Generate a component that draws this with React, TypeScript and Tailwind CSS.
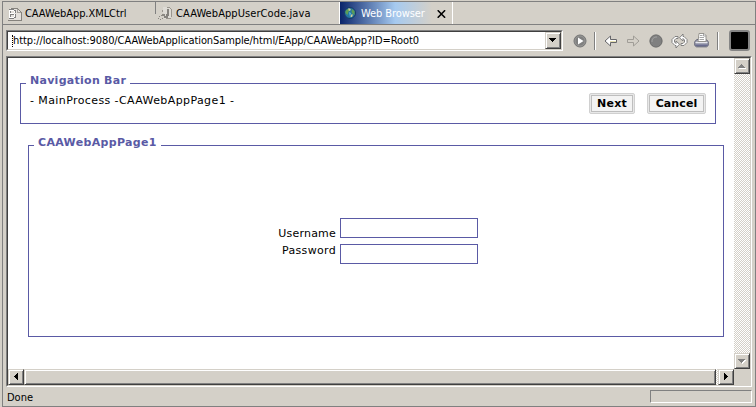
import React from 'react';

const ui = "font-['DejaVu_Sans_Condensed','DejaVu_Sans',sans-serif]";
const raised =
  'box-border border border-t-[#d4d0c8] border-l-[#d4d0c8] border-r-[#404040] border-b-[#404040] bg-[#d4d0c8] shadow-[inset_1px_1px_0_#fff,inset_-1px_-1px_0_#808080]';
const checker =
  'bg-[repeating-conic-gradient(#d4d0c8_0_25%,#fff_0_50%)] bg-[length:2px_2px]';

function Arrow({ dir, disabled }: { dir: 'up' | 'down' | 'left' | 'right'; disabled?: boolean }) {
  const d = {
    up: 'M3 0h1v1h1v1h1v1h1v1H0V3h1V2h1V1h1z',
    down: 'M0 0h7v1H6v1H5v1H4v1H3V3H2V2H1V1H0z',
    left: 'M3 0h1v7H3V6H2V5H1V4H0V3h1V2h1V1h1z',
    right: 'M0 0h1v1h1v1h1v1h1v1H3v1H2v1H1v1H0z',
  }[dir];
  const flat = dir === 'up' || dir === 'down';
  return (
    <svg width={flat ? 8 : 5} height={flat ? 5 : 8} shapeRendering="crispEdges" className="shrink-0">
      {disabled && <path d={d} fill="#fff" transform="translate(1 1)" />}
      <path d={d} fill={disabled ? '#808080' : '#000'} />
    </svg>
  );
}

function DocIcon() {
  return (
    <svg width="16" height="16" className="shrink-0" shapeRendering="crispEdges">
      <path d="M3 3h8v1h1v1h1v1h1v9H2" fill="#e4e1dc" />
      <path d="M4 3.5h7M11 4.5h1M12 5.5h1M13 6.5h1M14.5 7v8M1 15.5h14" fill="none" stroke="#85827d" />
      <path d="M10.5 4v3.5H14" fill="none" stroke="#a5a29c" />
      <path d="M2 4.5h5M2 8.5h5M2 12.5h5M2.5 5v8M7.5 5v3M7.5 9v4" fill="none" stroke="#808080" strokeWidth="2" />
      <path d="M2 5.5h5M2 8.5h5M2 12.5h5M2.5 5v8M7.5 6v2M7.5 9v3" fill="none" stroke="#fff" />
    </svg>
  );
}

function JavaIcon() {
  return (
    <svg width="15" height="16" className="shrink-0" shapeRendering="crispEdges">
      <path d="M5 2h6l2 2v10H6z" fill="#dedbd5" />
      <path d="M9 2.5h3M12 3.5h1M13.5 4v8M8 13.5h5M4.5 5v2" fill="none" stroke="#99958e" />
      <path d="M10 4v6H9v2H6" fill="none" stroke="#85827d" strokeWidth="2" />
      <path d="M4 9l1 2 1-2 1 2M0 13h1m1 1h1m1-1h1m-2-3h1M1 11h1" fill="none" stroke="#8b8882" />
    </svg>
  );
}

function Globe() {
  return (
    <svg width="12" height="12" viewBox="0 0 12 12" className="shrink-0">
      <circle cx="6" cy="6" r="5.5" fill="#2676a1" stroke="#173966" />
      <path d="M1.5 4l2-2 2 1-1 2-1 3-2-2zM8 2l2.5 2v4L9 7 7.5 5z" fill="#5d9e55" />
      <path d="M4 1.5h2L7 3 5 4zM7 7.5h2L8 10H6.5z" fill="#d4ce92" />
      <path d="M5 5l2 1-1 4z" fill="#57b8de" />
    </svg>
  );
}

function GoIcon() {
  return (
    <svg width="14" height="14" viewBox="0 0 14 14" className="shrink-0">
      <circle cx="7" cy="7" r="6" fill="#808080" stroke="#747474" />
      <circle cx="7" cy="7" r="5" fill="none" stroke="#a0a09e" strokeWidth=".7" />
      <path d="M5 3.5L10.5 7 5 10.5z" fill="#fff" />
    </svg>
  );
}

function NavArrow({ forward }: { forward?: boolean }) {
  return (
    <svg width="13" height="12" viewBox="0 0 13 12" className="shrink-0">
      {forward ? (
        <path d="M.5 4.5h6V1l5.5 5-5.5 5V7.5h-6z" fill="#d4d0c8" stroke="#a09d97" />
      ) : (
        <>
          <path d="M12.5 4.5H6.5V1L1 6l5.5 5V7.5h6z" fill="#fff" stroke="#66666a" />
          <path d="M6 6.5h6" stroke="#e5dfb0" />
        </>
      )}
    </svg>
  );
}

function StopIcon() {
  return (
    <svg width="14" height="14" viewBox="0 0 14 14" className="shrink-0">
      <circle cx="7" cy="7" r="6.1" fill="#808080" stroke="#666" />
      <path d="M3 8a4.3 4.3 0 0 1 5-5" fill="none" stroke="#a2a2a2" />
    </svg>
  );
}

function RefreshIcon() {
  return (
    <svg width="17" height="16" viewBox="0 0 17 16" className="shrink-0">
      <path d="M7 3.5H4L1 6.5v3l3 3h1v2.5l3.5-3.8L5 8v2.5L3.5 9V7L5 5.5h2z" fill="#fff" stroke="#777" strokeWidth=".9" />
      <path d="M10 12.5h3l3-3v-3l-3-3h-1V1L8.5 4.8 12 8V5.5L13.5 7v2L12 10.5h-2z" fill="#fff" stroke="#777" strokeWidth=".9" />
    </svg>
  );
}

function PrintIcon() {
  return (
    <svg width="15" height="15" viewBox="0 0 15 15" className="shrink-0">
      <path d="M3 6.5L.8 8.5v4l1.7 1.3h10l1.7-1.3v-4L12 6.5z" fill="#a5a7b7" stroke="#5b5d72" />
      <path d="M4 8.5L5 .5h5L12 2.5v6z" fill="#fff" stroke="#8d8b86" strokeWidth=".9" />
      <path d="M6 2.5h2.5M5.5 4.5h4.5M5.5 6.5h4.5M9.5 1v2H12" fill="none" stroke="#8f8f8f" strokeWidth=".8" />
      <path d="M1.5 9.5h12" stroke="#e6e6ec" />
      <path d="M1.5 12.2h12" stroke="#62658a" strokeWidth="1.4" />
    </svg>
  );
}

const Separator = () => <div className="h-[18px] w-[2px] shrink-0 border-l border-r border-l-[#808080] border-r-white" />;

function Tabs() {
  return (
    <div className="flex h-[23px] shrink-0 border-b border-[#808080] text-[11px] leading-[13px]">
      <div className="flex w-[152px] shrink-0 pt-[3px] pl-[4px]">
        <DocIcon />
        <span className="mt-[2px] ml-[2px] whitespace-nowrap tracking-[-0.07px]">CAAWebApp.XMLCtrl</span>
      </div>
      <div className="h-[12px] w-px shrink-0 bg-[#808080]" />
      <div className="flex w-[184px] shrink-0 pt-[3px] pl-[2px]">
        <JavaIcon />
        <span className="mt-[2px] ml-[3px] whitespace-nowrap tracking-[0.08px]">CAAWebAppUserCode.java</span>
      </div>
      <div className="-ml-px flex h-[22px] w-[114px] shrink-0 border-r border-l border-white">
        <div className="flex w-[92px] bg-[linear-gradient(90deg,#0a246a_0%,#a6caf0_60%,#d4d0c8_100%)] pt-[5px] pl-[4px] text-white">
          <Globe />
          <span className="ml-[5px] whitespace-nowrap tracking-[-0.08px]">Web Browser</span>
        </div>
        <svg width="9" height="8" viewBox="0 0 9 8" className="mt-[8px] ml-[5px] shrink-0">
          <path d="M.7.3l7.4 7.4M8.1.3L.7 7.7" stroke="#000" strokeWidth="1.6" />
        </svg>
      </div>
    </div>
  );
}

function Toolbar() {
  return (
    <div className="flex h-[31px] shrink-0 items-start pt-[5px] pl-[3px]">
      <div className="flex h-[21px] w-[557px] shrink-0 border border-t-[#808080] border-r-white border-b-white border-l-[#808080]">
        <div className="flex grow border border-t-[#404040] border-r-[#d4d0c8] border-b-[#d4d0c8] border-l-[#404040] bg-white pl-[4px]">
          <div className="mt-[3px] h-[12px] w-px border-l border-dotted border-black" />
          <span className="mt-[2px] grow text-[11px] leading-[13px] whitespace-nowrap tracking-[-0.09px]">
            http://localhost:9080/CAAWebApplicationSample/html/EApp/CAAWebApp?ID=Root0
          </span>
          <div className={`flex w-[16px] shrink-0 items-center justify-center ${raised}`}>
            <Arrow dir="down" />
          </div>
        </div>
      </div>
      <div className="flex h-[21px] items-center pl-[10px]">
        <GoIcon />
        <div className="w-[7px]" />
        <Separator />
        <div className="w-[8px]" />
        <NavArrow />
        <div className="w-[10px]" />
        <NavArrow forward />
        <div className="w-[9px]" />
        <StopIcon />
        <div className="w-[8px]" />
        <RefreshIcon />
        <div className="w-[6px]" />
        <PrintIcon />
        <div className="w-[8px]" />
        <Separator />
        <div className="ml-[10px] h-[21px] w-[21px] rounded-[3px] border-2 border-[#858585] bg-black" />
      </div>
    </div>
  );
}

function Group({ title, className, titleClass, children }: { title: string; className: string; titleClass: string; children: React.ReactNode }) {
  return (
    <section className={`border border-[#5a5aa5] ${className}`}>
      <h2 className={`-mt-[11px] ml-[5px] h-[15px] bg-white pl-[4px] text-[11px] leading-[15px] font-bold whitespace-nowrap text-[#5a5aa5] ${titleClass}`}>
        {title}
      </h2>
      {children}
    </section>
  );
}

function PageButton({ label, className }: { label: string; className: string }) {
  return (
    <button className={`h-[21px] rounded-[2px] border border-[#d0d0d0] bg-[#e8e8e8] p-px ${className}`}>
      <span className="block h-[17px] border border-[#bebebe] bg-[#f3f3f3] text-[11px] leading-[15px] font-bold whitespace-nowrap">{label}</span>
    </button>
  );
}

function Page() {
  return (
    <main className="flex grow flex-col bg-white pl-[12px] font-['DejaVu_Sans',sans-serif] text-[11px]">
      <Group title="Navigation Bar" className="mt-[25px] h-[41px] w-[696px] shrink-0" titleClass="w-[104px] tracking-[0.27px]">
        <div className="flex pl-[9px]">
          <span className="mt-[5px] w-[559px] leading-[15px] whitespace-nowrap tracking-[0.4px]">- MainProcess -CAAWebAppPage1 -</span>
          <div className="mt-[5px] flex gap-[12px]">
            <PageButton label="Next" className="w-[46px] tracking-[0.2px]" />
            <PageButton label="Cancel" className="w-[59px] tracking-[0.1px]" />
          </div>
        </div>
      </Group>
      <Group title="CAAWebAppPage1" className="mt-[21px] ml-[8px] h-[192px] w-[696px] shrink-0" titleClass="w-[127px] tracking-[0.33px]">
        <form className="mt-[68px] flex pl-[240px]">
          <div className="flex w-[67px] flex-col items-end pt-[7px] leading-[17px]">
            <label className="tracking-[0.2px]">Username</label>
            <label className="tracking-[0.32px]">Password</label>
          </div>
          <div className="ml-[4px] flex flex-col gap-[6px]">
            <input className="h-[20px] w-[138px] border border-[#5a5aa5] outline-none" />
            <input className="h-[20px] w-[138px] border border-[#5a5aa5] outline-none" />
          </div>
        </form>
      </Group>
    </main>
  );
}

function BrowserPane() {
  return (
    <div className="ml-[3px] flex h-[331px] w-[746px] shrink-0 border border-t-[#808080] border-r-white border-b-white border-l-[#808080]">
      <div className="flex grow flex-col border border-t-[#404040] border-r-[#d4d0c8] border-b-[#d4d0c8] border-l-[#404040]">
        <div className="flex h-[311px]">
          <Page />
          <div className={`flex w-[16px] shrink-0 flex-col justify-between ${checker}`}>
            <div className={`flex h-[16px] items-center justify-center ${raised}`}><Arrow dir="up" disabled /></div>
            <div className={`flex h-[16px] items-center justify-center ${raised}`}><Arrow dir="down" disabled /></div>
          </div>
        </div>
        <div className="flex h-[16px]">
          <div className={`flex w-[16px] items-center justify-center ${raised}`}><Arrow dir="left" /></div>
          <div className={`w-[692px] ${raised}`} />
          <div className={`w-[2px] ${checker}`} />
          <div className={`flex w-[16px] items-center justify-center ${raised}`}><Arrow dir="right" /></div>
          <div className="grow bg-[#d4d0c8]" />
        </div>
      </div>
    </div>
  );
}

export default function App() {
  return (
    <div className={`h-[407px] w-[756px] overflow-hidden bg-[#d4d0c8] pt-px pl-[2px] text-black ${ui}`}>
      <div className="flex h-[406px] w-[754px] flex-col border border-[#808080]">
        <Tabs />
        <Toolbar />
        <BrowserPane />
        <footer className="flex grow items-start pl-[4px] text-[11px]">
          <span className="mt-[4px] w-[643px] leading-[13px]">Done</span>
          <div className="mt-[3px] h-[13px] w-[102px] border border-t-[#808080] border-r-white border-b-white border-l-[#808080]" />
        </footer>
      </div>
    </div>
  );
}
